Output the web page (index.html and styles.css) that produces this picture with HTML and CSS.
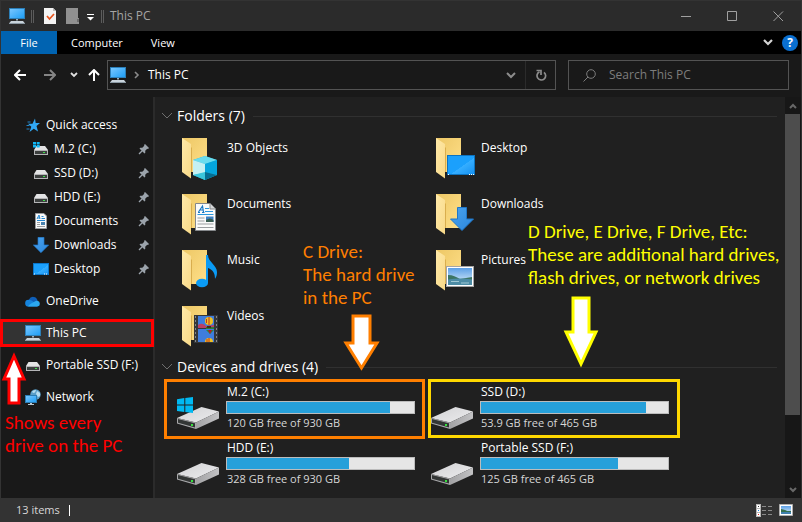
FILE: index.html
```html
<!DOCTYPE html>
<html lang="en">
<head>
<meta charset="utf-8">
<title>This PC</title>
<link rel="stylesheet" href="styles.css">
</head>
<body>
<svg class="defs" aria-hidden="true">
  <defs>
    <linearGradient id="g-screen" x1="0" y1="0" x2="1" y2="1"><stop offset="0" stop-color="#7cc8ff"/><stop offset="1" stop-color="#1b9df5"/></linearGradient>
    <linearGradient id="g-desk" x1="0" y1="0" x2="1" y2="1"><stop offset="0" stop-color="#1ba0fc"/><stop offset=".55" stop-color="#1ba0fc"/><stop offset=".56" stop-color="#35aeff"/><stop offset="1" stop-color="#1490f0"/></linearGradient>
    <linearGradient id="g-back" x1="0" y1="0" x2="1" y2="1"><stop offset="0" stop-color="#edc765"/><stop offset="1" stop-color="#ffe08a"/></linearGradient>
    <linearGradient id="g-flap" x1="0" y1="0" x2="1" y2="1"><stop offset="0" stop-color="#ffe9a8"/><stop offset="1" stop-color="#f8d988"/></linearGradient>
    <linearGradient id="g-top" x1="0" y1="0" x2="1" y2="1"><stop offset="0" stop-color="#d2d2d4"/><stop offset="1" stop-color="#ececee"/></linearGradient>
    <linearGradient id="g-side" x1="0" y1="0" x2="1" y2="0"><stop offset="0" stop-color="#a2a2a4"/><stop offset="1" stop-color="#c2c2c4"/></linearGradient>
    <linearGradient id="g-arrow" x1="0" y1="0" x2="1" y2="1"><stop offset="0" stop-color="#4aa3ee"/><stop offset="1" stop-color="#2b86dc"/></linearGradient>
    <linearGradient id="g-sky" x1="0" y1="0" x2="0" y2="1"><stop offset="0" stop-color="#5b9fe6"/><stop offset="1" stop-color="#e4f3fb"/></linearGradient>
  </defs>
  <symbol id="pc" viewBox="0 0 16 16">
    <rect x=".5" y=".5" width="15" height="10" fill="url(#g-screen)" stroke="#2c7fb8"/>
    <path d="M7 11h2v1.500H7z" fill="#9db0bc"/>
    <path d="M2 13h12l2 2.500H0z" fill="#c9d4dc"/><path d="M0 15h16v1H0z" fill="#8c9aa4"/>
  </symbol>
  <symbol id="drive-s" viewBox="0 0 16 16">
    <path d="M3.500 5h8.500l3 4H1z" fill="#e3e3e4"/>
    <rect x="1" y="9" width="14" height="5" fill="#b4b4b6"/><rect x="2" y="10" width="12" height="3" fill="#3c3f3e"/>
    <rect x="10" y="11" width="2" height="1" fill="#3ee04a"/>
  </symbol>
  <symbol id="winlogo" viewBox="0 0 16 16">
    <path d="M0 2.200 7.300 1v6.500H0zM8.300.9 16 0v7.500H8.300zM0 8.500h7.300V15L0 14zM8.300 8.500H16V16l-7.700-1z" fill="#00b9f2"/>
  </symbol>
  <symbol id="drive-win" viewBox="0 0 16 16">
    <use href="#drive-s"/><path d="M0 1h3v2.500H0zM3.700 1h3v2.500h-3zM0 4h3v2.500H0zM3.700 4h3v2.500h-3z" fill="#12b7f5"/>
  </symbol>
  <symbol id="star" viewBox="0 0 16 16">
    <path d="M10 1.500 10.700 6H15l-3.500 3 1.500 5.500-4.200-2.800L4.500 15l1.800-5.200L3 6.700h4.500z" fill="#31a9f5"/>
    <path d="M2.500 5h3M1.500 8.500h3M1.500 12h3" stroke="#2383c5"/>
  </symbol>
  <symbol id="page" viewBox="0 0 21 28">
    <path d="M.5.500H15L20.500 6v21.500H.5z" fill="#fafafa" stroke="#85888b"/><path d="M15 .5V6h5.500" fill="#d6d8da" stroke="#85888b"/>
    <path d="m3.500 9 4-6 1 6M5 7h3.500M3 9.500h2M7 9.500h2.500" fill="none" stroke="#1a78c5" stroke-width="1.200"/>
    <path d="M10 5.500h4M10 8.500h8M2.500 11.500h16" stroke="#2996de"/>
    <path d="M2.500 15h7M2.500 18h7M2.500 21h16M2.500 24.500h16" stroke="#9a9da0"/>
    <rect x="11" y="13.500" width="7.500" height="5.500" fill="#3d80c3"/><path d="M11 17q4-3 7.500 0v2H11z" fill="#385b50"/>
  </symbol>
  <symbol id="doc-s" viewBox="0 0 16 16">
    <path d="M2.500.500H11L13.500 3v12.500h-11z" fill="#fafafa" stroke="#9a9da0"/>
    <path d="m4 6 2-4 1 4M4.500 5H7M8.500 3.500h2M8.500 5.500H12M4 7.500h8" fill="none" stroke="#2487d0"/>
    <path d="M4 9.500h3M4 11.500h3M4 13.500h8" stroke="#9a9da0"/><path d="M8 9h4v3H8z" fill="#4b83ae"/>
  </symbol>
  <symbol id="down" viewBox="0 0 24 24">
    <path d="M7.500.500h9V12h7L12 23.500.500 12h7z" fill="url(#g-arrow)" stroke="#1f77c8"/>
  </symbol>
  <symbol id="desk-s" viewBox="0 0 16 16">
    <rect x=".5" y="2.500" width="15" height="11" fill="url(#g-desk)" stroke="#0b76c9"/>
    <path d="M1 13h1M11 13h1M13 13h1" stroke="#fff"/>
  </symbol>
  <symbol id="cloud" viewBox="0 0 16 16">
    <path d="M4 6.500a4.500 4.500 0 0 1 8.500 1L8 13H4z" fill="#0f5fb8"/>
    <path d="M3.500 13.500a3.300 3.300 0 0 1 0-6.700c2 0 3 .7 5 2l4 4.700z" fill="#1583dc"/>
    <path d="M3 13.500c1-2 3-3 5-4 2-1.300 3-1.800 4.500-1.700a2.900 2.900 0 0 1 0 5.700z" fill="#2ba9f0"/>
  </symbol>
  <symbol id="net" viewBox="0 0 16 16">
    <circle cx="10.500" cy="5.500" r="5.200" fill="#5b9ec7"/>
    <path d="M7 2.500q2-2 4-1.500l-1 2.500-2 .5zM12 2l3 2v3l-2 1-2-3z" fill="#b6dcef"/>
    <rect x=".5" y="6.500" width="11" height="7" fill="url(#g-screen)" stroke="#2a7db5"/>
    <path d="M5 14h2v1H5zM3 15h6v1H3z" fill="#b8c6cf"/>
  </symbol>
  <symbol id="pin" viewBox="0 0 12 12">
    <path d="M7 1 11 5 10 6 9.200 5.700 7.200 7.700 7.300 9.700 6.500 10.500 1.500 5.500 2.300 4.700 4.300 4.800 6.300 2.800 6 2z" fill="#9ba3ab"/>
    <path d="m4.200 7.800-3.200 3.200" stroke="#9ba3ab" stroke-width="1.300"/>
  </symbol>
  <symbol id="folder" viewBox="0 0 48 48">
    <path d="M5 6h25v34H5z" fill="url(#g-back)"/>
    <path d="M13 40V14l2 2v24z" fill="#d9ae4e"/>
    <path d="m5 6 9 6v34.500L5 40z" fill="url(#g-flap)"/>
  </symbol>
  <symbol id="drive" viewBox="0 0 48 48">
    <path d="M0 35 24.500 24 42 28.500 19 39.500z" fill="url(#g-top)"/>
    <path d="M19 39.500 42 28.500v7L19 46z" fill="url(#g-side)"/>
    <path d="m0 35 19 4.500V46L0 40.500z" fill="#a9a9ab"/>
    <path d="m1 36 17 4.200v4.300L1 39.700z" fill="#333635"/>
    <rect x="14" y="41" width="2" height="2" fill="#35e03d"/>
  </symbol>
  <symbol id="photo" viewBox="0 0 28 21">
    <rect x=".5" y=".5" width="27" height="20" fill="#fff" stroke="#a5a5a5"/>
    <rect x="2" y="2" width="24" height="17" fill="url(#g-sky)"/>
    <path d="M2 9c5 0 8 2 12 4l12-2v4H2z" fill="#3c7562"/><path d="M2 13.500q12-2 24 0V19H2z" fill="#4d8ca5"/>
    <path d="M5 15.500h8M15 17h8" stroke="#9fc8d5"/>
  </symbol>
</svg>

<div class="window">
  <header class="titlebar">
    <svg class="i16" aria-hidden="true"><use href="#pc"/></svg>
    <span class="rule"></span>
    <button class="quick" aria-label="Properties"><svg width="12" height="16" viewBox="0 0 12 16"><path d="M0 0h9l3 3v13H0z" fill="#f3f3f3"/><path d="M9 0v3h3" fill="#bbb"/><path d="m3 8 2.500 3L10 6" fill="none" stroke="#e8531c" stroke-width="1.700"/></svg></button>
    <button class="quick" aria-label="New folder"><svg width="14" height="16" viewBox="0 0 14 16"><path d="M1 0h12v10h1v6H1z" fill="#919191"/><path d="M12 11h2v3h-2z" fill="#6c6c6c"/></svg></button>
    <button class="quick customize" aria-label="Customize toolbar"><svg width="8" height="16" viewBox="0 0 8 16"><path d="M0 6.500h7" stroke="#fff"/><path d="M0 9h7L3.500 12.500z" fill="#fff"/></svg></button>
    <span class="rule"></span>
    <h1 class="title">This PC</h1>
    <div class="controls">
      <button aria-label="Minimize"><svg width="11" height="11" viewBox="0 0 11 11"><path d="M0 5.500h10"/></svg></button>
      <button aria-label="Maximize"><svg width="11" height="11" viewBox="0 0 11 11"><path d="M.5.500h9v9h-9z"/></svg></button>
      <button aria-label="Close"><svg width="11" height="11" viewBox="0 0 11 11"><path d="m.5.500 9.500 9.500M10 .5.500 10"/></svg></button>
    </div>
  </header>

  <nav class="tabs" aria-label="Ribbon">
    <button class="tab file">File</button>
    <button class="tab">Computer</button>
    <button class="tab">View</button>
    <div class="tabs-end">
      <button aria-label="Expand ribbon"><svg width="10" height="8" viewBox="0 0 10 8"><path d="m1 1 4 4 4-4" fill="none" stroke="#d4d4d4" stroke-width="2.200"/></svg></button>
      <button class="help" aria-label="Help">?</button>
    </div>
  </nav>

  <div class="addressbar">
    <div class="navs">
      <button aria-label="Back"><svg width="12" height="12" viewBox="0 0 12 12"><path d="M12 6H1M6 1 1 6l5 5" fill="none" stroke="#fff" stroke-width="2"/></svg></button>
      <button aria-label="Forward"><svg width="12" height="12" viewBox="0 0 12 12"><path d="M0 6h11M6 1l5 5-5 5" fill="none" stroke="#858585" stroke-width="2"/></svg></button>
      <button aria-label="Recent locations"><svg width="8" height="12" viewBox="0 0 8 12"><path d="m1 4 3 3 3-3" fill="none" stroke="#e0e0e0" stroke-width="1.800"/></svg></button>
      <button aria-label="Up"><svg width="12" height="12" viewBox="0 0 12 12"><path d="M6 12V1M1 6l5-5 5 5" fill="none" stroke="#fff" stroke-width="2"/></svg></button>
    </div>
    <div class="path">
      <svg class="i16" aria-hidden="true"><use href="#pc"/></svg>
      <svg width="6" height="8" viewBox="0 0 6 8" aria-hidden="true"><path d="m1 1 3 3-3 3" fill="none" stroke="#8a8a8a" stroke-width="1.600"/></svg>
      <a href="#" class="crumb">This PC</a>
      <button class="history" aria-label="Previous locations"><svg width="10" height="8" viewBox="0 0 10 8"><path d="m1 2 4 4 4-4" fill="none" stroke="#8c8c8c" stroke-width="2"/></svg></button>
      <button class="refresh" aria-label="Refresh"><svg width="12" height="12" viewBox="0 0 12 12"><path d="M9 3.300A4.300 4.300 0 1 1 4.500 2.800" fill="none" stroke="#8c8c8c" stroke-width="1.700"/><path d="M1.500 1.500H6V6" fill="none" stroke="#8c8c8c" stroke-width="1.700"/></svg></button>
    </div>
    <label class="search">
      <svg width="13" height="13" viewBox="0 0 13 13" aria-hidden="true"><circle cx="8" cy="5" r="4.300" fill="none" stroke="#7d7d7d"/><path d="M5 8 .5 12.500" stroke="#7d7d7d"/></svg>
      <input type="text" placeholder="Search This PC" aria-label="Search This PC">
    </label>
  </div>

  <div class="main">
    <nav class="side" aria-label="Locations">
      <ul class="group">
        <li><a href="#"><svg class="i16"><use href="#star"/></svg>Quick access</a></li>
        <li class="sub"><a href="#"><svg class="i16"><use href="#drive-win"/></svg>M.2 (C:)<svg class="pin"><use href="#pin"/></svg></a></li>
        <li class="sub"><a href="#"><svg class="i16"><use href="#drive-s"/></svg>SSD (D:)<svg class="pin"><use href="#pin"/></svg></a></li>
        <li class="sub"><a href="#"><svg class="i16"><use href="#drive-s"/></svg>HDD (E:)<svg class="pin"><use href="#pin"/></svg></a></li>
        <li class="sub"><a href="#"><svg class="i16"><use href="#doc-s"/></svg>Documents<svg class="pin"><use href="#pin"/></svg></a></li>
        <li class="sub"><a href="#"><svg class="i16"><use href="#down"/></svg>Downloads<svg class="pin"><use href="#pin"/></svg></a></li>
        <li class="sub"><a href="#"><svg class="i16"><use href="#desk-s"/></svg>Desktop<svg class="pin"><use href="#pin"/></svg></a></li>
      </ul>
      <ul class="group"><li><a href="#"><svg class="i16"><use href="#cloud"/></svg>OneDrive</a></li></ul>
      <ul class="group"><li class="current"><a href="#" aria-current="page"><svg class="i16"><use href="#pc"/></svg>This PC</a></li></ul>
      <ul class="group"><li><a href="#"><svg class="i16"><use href="#drive-s"/></svg>Portable SSD (F:)</a></li></ul>
      <ul class="group"><li><a href="#"><svg class="i16"><use href="#net"/></svg>Network</a></li></ul>
    </nav>

    <main class="content">
      <section>
        <h2 class="heading"><svg width="12" height="8" viewBox="0 0 12 8"><path d="m1 1 5 5 5-5" fill="none" stroke="#6f6f6f"/></svg>Folders (7)</h2>
        <div class="tiles">
          <a class="tile folder" href="#"><svg class="i48"><use href="#folder"/><path d="m16 28 12-4 12 4v15l-12 5-12-5z" fill="#23b6d6"/><path d="m16 28 12-4 12 4-12 4z" fill="#6adcee"/><path d="m16 28 12 4v9l-12 2z" fill="#c5f0f2"/><path d="m28 32 12-4v15l-12-3z" fill="#04a5dd"/><path d="m16 43 12-3v8z" fill="#3bc6dc"/><path d="m28 40 12 3-12 5z" fill="#056e93"/></svg><span class="name">3D Objects</span></a>
          <a class="tile folder" href="#"><svg class="i48"><use href="#folder"/><rect x="16.500" y="23.500" width="27" height="19" fill="url(#g-desk)" stroke="#0c73c0"/><path d="M17 42.500h1M38 42.500h1M40 42.500h1M42 42.500h1" stroke="#fff"/></svg><span class="name">Desktop</span></a>
          <a class="tile folder" href="#"><svg class="i48"><use href="#folder"/><use href="#page" x="18" y="15" width="21" height="28"/></svg><span class="name">Documents</span></a>
          <a class="tile folder" href="#"><svg class="i48"><use href="#folder"/><use href="#down" x="19" y="19" width="24" height="24"/></svg><span class="name">Downloads</span></a>
          <a class="tile folder" href="#"><svg class="i48"><use href="#folder"/><ellipse cx="25" cy="39" rx="6" ry="4.300" fill="#0a9bf5"/><path d="M29 39V11h2c0 7 9 10 9 17 0 4-1 5-2 7 0-6-2-9-7-11v15z" fill="#0a9bf5"/></svg><span class="name">Music</span></a>
          <a class="tile folder" href="#"><svg class="i48"><use href="#folder"/><use href="#photo" x="15" y="22" width="28" height="21"/></svg><span class="name">Pictures</span></a>
          <a class="tile folder" href="#"><svg class="i48"><use href="#folder"/><path d="M17 15h24v28H17z" fill="#35373a"/><path d="M18.500 16v27M39.500 16v27" stroke="#85888b" stroke-dasharray="2 2"/><path d="M21 16h16v12H21zM21 29h16v13H21z" fill="#3f7ddd"/><path d="M21 25q4-3 8 1l8-1v3H21z" fill="#bd3f63"/><path d="M29 27h8v2h-8z" fill="#2c7d3b"/><circle cx="32" cy="21" r="4" fill="#f0c023"/><path d="M32 17v8M29.500 19v4" stroke="#c2331c"/><path d="M30 26h4v2h-4z" fill="#4c2d12"/><path d="M29 30h8l-4 4z" fill="#29893d"/><path d="m31 30 2 4 2-4z" fill="#b61d29"/><path d="M28 42a4 4 0 0 1 8 0z" fill="#f0c023"/><path d="M32 38v4M30 39v3" stroke="#c2331c"/></svg><span class="name">Videos</span></a>
        </div>
      </section>
      <section>
        <h2 class="heading"><svg width="12" height="8" viewBox="0 0 12 8"><path d="m1 1 5 5 5-5" fill="none" stroke="#6f6f6f"/></svg>Devices and drives (4)</h2>
        <div class="tiles">
          <a class="tile drive mark-orange" href="#"><svg class="i48"><use href="#drive"/><use href="#winlogo" x="0" y="14" width="16" height="16"/></svg><span class="info"><span class="name">M.2 (C:)</span><span class="bar"><span class="used" style="width:87%"></span></span><span class="free">120 GB free of 930 GB</span></span></a>
          <a class="tile drive mark-yellow" href="#"><svg class="i48"><use href="#drive"/></svg><span class="info"><span class="name">SSD (D:)</span><span class="bar"><span class="used" style="width:88%"></span></span><span class="free">53.9 GB free of 465 GB</span></span></a>
          <a class="tile drive" href="#"><svg class="i48"><use href="#drive"/></svg><span class="info"><span class="name">HDD (E:)</span><span class="bar"><span class="used" style="width:65%"></span></span><span class="free">328 GB free of 930 GB</span></span></a>
          <a class="tile drive" href="#"><svg class="i48"><use href="#drive"/></svg><span class="info"><span class="name">Portable SSD (F:)</span><span class="bar"><span class="used" style="width:73%"></span></span><span class="free">125 GB free of 465 GB</span></span></a>
        </div>
      </section>
    </main>

    <div class="scroll" aria-hidden="true">
      <svg width="8" height="17" viewBox="0 0 8 17"><path d="m1 11 3-3 3 3" fill="none" stroke="#686868" stroke-width="2"/></svg>
      <div class="track"><div class="thumb"></div></div>
      <svg width="8" height="17" viewBox="0 0 8 17"><path d="m1 7 3 3 3-3" fill="none" stroke="#686868" stroke-width="2"/></svg>
    </div>
  </div>

  <footer class="status">
    <span class="count">13 items</span>
    <div class="views">
      <button aria-label="Details view"><svg width="16" height="13" viewBox="0 0 16 13"><path d="M0 0h5v13H0z" fill="#b8b8b8"/><path d="M1 1h3v3H1zM1 5h3v3H1zM1 9h3v3H1z" fill="#fff"/><path d="M2 2h1v1H2z" fill="#333"/><path d="M2 6h1v1H2z" fill="#1683e0"/><path d="M2 10h1v1H2z" fill="#e02020"/><path d="M6 2.500h4M12 2.500h4M6 6.500h4M12 6.500h4M6 10.500h4M12 10.500h4" stroke="#8a8a8a"/></svg></button>
      <button aria-label="Thumbnail view"><svg width="14" height="12" viewBox="0 0 14 12"><path d="M.5.500h13v11H.5z" fill="#fff" stroke="#b0b0b0"/><path d="M2 2h10v8H2z" fill="url(#g-sky)"/><path d="M2 5q5 1 6 2h4v1H2z" fill="#35704f"/><path d="M2 8h10v2H2z" fill="#3f7fae"/></svg></button>
    </div>
  </footer>

  <p class="note note-red">Shows every<br>drive on the PC</p>
  <p class="note note-orange">C Drive:<br>The hard drive<br>in the PC</p>
  <p class="note note-yellow">D Drive, E Drive, F Drive, Etc:<br>These are additional hard drives,<br>flash drives, or network drives</p>
  <svg class="arrow arrow-red" width="26" height="54" viewBox="0 0 26 54" aria-hidden="true"><path d="M13 5 23 28h-5v24H8V28H3z"/></svg>
  <svg class="arrow arrow-orange" width="40" height="60" viewBox="0 0 40 60" aria-hidden="true"><path d="M12 4h17v27h7L20.500 56 5 31h7z"/></svg>
  <svg class="arrow arrow-yellow" width="40" height="74" viewBox="0 0 40 74" aria-hidden="true"><path d="M13 4h16v34h7L21 70 6 38h7z"/></svg>
</div>
</body>
</html>
```
FILE: styles.css
```css
* { box-sizing: border-box; }

body {
  margin: 0;
  background: #191919;
  color: #fff;
  font: 12px/16px "Open Sans", "Noto Sans", sans-serif;
}

button {
  display: flex;
  align-items: center;
  justify-content: center;
  padding: 0;
  border: 0;
  background: none;
  color: inherit;
  font: inherit;
}

a { color: inherit; text-decoration: none; }
svg { flex: none; }
ul { margin: 0; padding: 0; list-style: none; }

.defs { position: absolute; width: 0; height: 0; }
.i16 { width: 16px; height: 16px; }
.i48 { width: 48px; height: 48px; }

.window {
  position: relative;
  display: flex;
  flex-direction: column;
  min-height: 100vh;
  border: solid #333;
  border-width: 1px 1px 0;
}

/* Title bar */
.titlebar {
  display: flex;
  align-items: center;
  height: 30px;
  padding-left: 8px;
  background: #2b2b2b;
}
.rule {
  width: 3px;
  height: 13px;
  margin: 0 6px;
  border: solid #5c5c5c;
  border-width: 0 1px;
}
.quick { margin: 0 5px 0 4px; }
.customize { margin: 0 0 0 3px; }
.title {
  margin: 0;
  color: #a5a5a5;
  font-size: 12px;
  font-weight: 400;
}
.controls { display: flex; margin-left: auto; }
.controls button { width: 46px; height: 30px; }
.controls path { fill: none; stroke: #a0a0a0; }

/* Ribbon tabs */
.tabs {
  display: flex;
  height: 23px;
  background: #000;
}
.tab { padding: 0 14px; font-size: 11px; }
.file { width: 56px; background: #0063b1; }
.tabs-end {
  display: flex;
  align-items: center;
  gap: 9px;
  margin-left: auto;
  padding-right: 3px;
}
.help {
  width: 16px;
  height: 16px;
  border-radius: 50%;
  background: #0a6fd0;
  font-weight: 700;
}

/* Address row */
.addressbar {
  display: flex;
  gap: 12px;
  height: 43px;
  padding: 6px 12px 7px 13px;
}
.navs {
  display: flex;
  align-items: center;
  gap: 14px;
  margin-right: -5px;
}
.navs button:nth-child(1) { margin-right: 4px; }
.navs button:nth-child(4) { margin-left: -4px; }
.path, .search {
  display: flex;
  align-items: center;
  border: 1px solid #535353;
}
.path { flex: 1; gap: 8px; padding-left: 2px; }
.crumb { flex: 1; }
.history { width: 28px; }
.refresh {
  align-self: stretch;
  width: 30px;
  margin-left: -8px;
  border-left: 1px solid #2b2b2b;
}
.search { width: 221px; gap: 13px; padding-left: 14px; }
.search input {
  flex: 1;
  min-width: 0;
  padding: 0;
  border: 0;
  outline: 0;
  background: none;
  color: #fff;
  font: inherit;
}
.search input::placeholder { color: #7d7d7d; opacity: 1; }

/* Body */
.main { display: flex; flex: 1; }
.side {
  width: 154px;
  padding-top: 16px;
  border-right: 2px solid #2b2b2b;
}
.group { margin-bottom: 8px; }
.group a {
  display: flex;
  align-items: center;
  gap: 5px;
  height: 24px;
  padding: 0 3px 0 24px;
  white-space: nowrap;
}
.sub a { padding-left: 32px; }
.pin { width: 12px; height: 12px; margin-left: auto; }
.current { position: relative; background: #333; }
.current::after {
  content: "";
  position: absolute;
  inset: -2px -1px;
  border: 3px solid #f00;
}

.content {
  flex: 1;
  min-width: 0;
  padding-top: 8px;
  background: #202020;
}
.heading {
  display: flex;
  align-items: center;
  gap: 4px;
  height: 22px;
  margin: 0 8px 5px 6px;
  font-size: 14px;
  font-weight: 400;
}
.heading::after {
  content: "";
  flex: 1;
  height: 1px;
  margin-left: 4px;
  background: #303030;
}
.tiles {
  display: grid;
  grid-template-columns: repeat(auto-fill, 254px);
  padding-left: 18px;
}
.tile {
  position: relative;
  display: flex;
  gap: 1px;
  height: 56px;
  padding-left: 4px;
}
.name, .free { padding-left: 1px; }
.folder .name { padding-top: 8px; }
.info { display: flex; flex-direction: column; padding-top: 1px; }
.bar {
  width: 189px;
  height: 13px;
  margin: 1px 0;
  border: 1px solid #bcbcbc;
  background: #e6e6e6;
}
.used { display: block; height: 100%; background: #26a0da; }
.free { color: #d6d6d6; font-size: 11px; }

.mark-orange::after, .mark-yellow::after {
  content: "";
  position: absolute;
  border: 3px solid #ff7f00;
  inset: -4px 2px 0 -9px;
}
.mark-yellow::after { inset: -4px 1px 1px 1px; border-color: #ffd800; }

.scroll {
  display: flex;
  flex-direction: column;
  align-items: center;
  width: 16px;
  padding-right: 1px;
  background: #171717;
}
.track { flex: 1; align-self: stretch; }
.thumb { height: 82%; background: #4d4d4d; }

/* Status bar */
.status {
  display: flex;
  align-items: center;
  justify-content: space-between;
  height: 24px;
  padding: 0 8px 0 15px;
  background: #333;
}
.count {
  display: flex;
  align-items: center;
  gap: 9px;
  color: #d8d8d8;
  font-size: 11px;
}
.count::after {
  content: "";
  width: 1px;
  height: 11px;
  background: #fff;
}
.views { display: flex; gap: 7px; }

/* Annotations lying over the window */
.note {
  position: absolute;
  margin: 0;
  font: 19px/23px Carlito, Lato, "Open Sans", sans-serif;
  white-space: nowrap;
}
.note-red { left: 4px; top: 410px; color: #f00; }
.note-orange { left: 302px; top: 239px; color: #ff7f00; }
.note-yellow { left: 527px; top: 219px; color: #ff0; }
.arrow { position: absolute; }
.arrow path { fill: #fff; stroke-width: 3px; }
.arrow-red { left: 0; top: 350px; }
.arrow-red path { stroke: #f00; }
.arrow-orange { left: 340px; top: 311px; }
.arrow-orange path { stroke: #ff7f00; }
.arrow-yellow { left: 559px; top: 293px; }
.arrow-yellow path { stroke: #ff0; }
```
